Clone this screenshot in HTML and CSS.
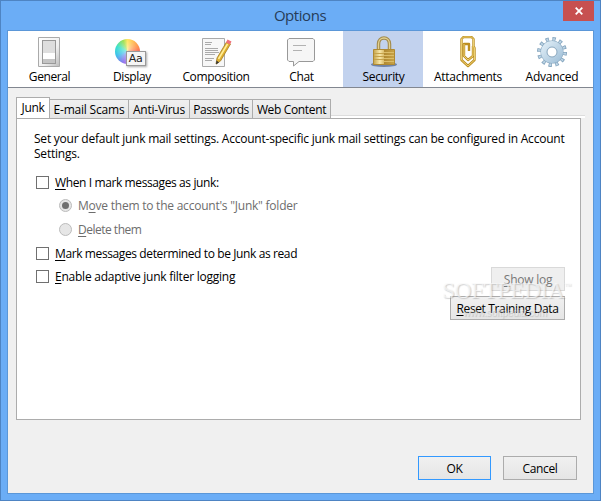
FILE: index.html
```html
<!DOCTYPE html>
<html lang="en">
<head>
<meta charset="utf-8">
<title>Options</title>
<link rel="stylesheet" href="styles.css">
</head>
<body>
<div class="window">
  <header class="titlebar"><h1>Options</h1>
    <button class="close" aria-label="Close"><svg width="8" height="8" viewBox="0 0 8 8"><path d="M.7.7l6.6 6.6M7.3.7L.7 7.3" stroke="#fff" stroke-width="1.8"/></svg></button>
  </header>
  <main class="client">
    <nav class="toolbar">
      <div class="tool t1"><svg width="32" height="32" viewBox="0 0 32 32"><defs><linearGradient id="sw" x2="1" y2="1"><stop stop-color="#fff"/><stop offset=".6" stop-color="#f0f0f0"/><stop offset="1" stop-color="#bbb"/></linearGradient></defs><path d="M5.500 1.500h21v29h-21z" fill="url(#sw)" stroke="#aaa"/><path d="M9 4h14v24H9z" fill="#999"/><path d="M10 5h12v12H10z" fill="#dedede"/><path d="M10 17h12v6H10z" fill="#fff"/><path d="M10 23h12v4H10z" fill="#c4c4c4"/></svg><span>General</span></div>
      <div class="tool t2"><div class="colorball"><i></i><b>Aa</b></div><span>Display</span></div>
      <div class="tool t3"><svg width="32" height="32" viewBox="0 0 32 32"><path d="M2.500 2.500h22v28h-22z" fill="#f7f7f7" stroke="#aaa"/><path d="M5 6.500h7M5 8.500h6M5 12.500h13M5 14.500h13M5 16.500h14M5 18.500h10M5 22.500h9M5 24.500h7" stroke="#aaa"/><path d="M16 28l1-6L26.500 6l4 2-10 17z" fill="#e0b030" stroke="#a37d26" stroke-width=".8"/><path d="M18.500 23L27.500 8" stroke="#fff09b" stroke-width="1.500"/><path d="M26 6.500l1.500-3 4 2-1.500 3z" fill="#f0707a"/><path d="M16 28.500l.5-4 2.500 2z" fill="#333"/></svg><span>Composition</span></div>
      <div class="tool t4"><svg width="32" height="32" viewBox="0 0 32 32"><path d="M4 2.500h24l1.500 1.500v20L28 25.500H14L8.500 30v-4.500H4L2.500 24V4z" fill="#f6f6f6" stroke="#999"/><path d="M8 9.500h13M8 14.500h9" stroke="#b2b2b2"/></svg><span>Chat</span></div>
      <div class="tool t5 selected"><svg width="32" height="32" viewBox="0 0 32 32"><defs><linearGradient id="lk"><stop stop-color="#c4a34a"/><stop offset=".3" stop-color="#f8e7a8"/><stop offset=".48" stop-color="#ddc071"/><stop offset=".52" stop-color="#b18a33"/><stop offset="1" stop-color="#c9a448"/></linearGradient></defs><ellipse cx="16" cy="28.500" rx="13" ry="2.500" fill="#7083a6"/><path d="M10.500 15V8c0-8 11-8 11 0v7" fill="none" stroke="#a28b4d" stroke-width="3.500"/><path d="M10.500 15V8c0-8 11-8 11 0v7" fill="none" stroke="#e2d190" stroke-width="1.300"/><path d="M5.500 13.500h21v15h-21z" fill="url(#lk)" stroke="#af8a34"/><path d="M6 17.500h10M6 20.500h10M6 23.500h10" stroke="#c5a24b"/><path d="M16 16.500h10M16 19.500h10M16 22.500h10M16 25.500h10" stroke="#dbbd6a"/></svg><span>Security</span></div>
      <div class="tool t6"><svg width="32" height="32" viewBox="0 0 32 32"><g fill="none" stroke-linejoin="round"><path d="M21 10v10l-5 4-4-4V8h5v7M9.500 24V3l2-2h8l2 2v7l1 2v12l-6.500 6z" stroke="#bd8f22" stroke-width="2.400"/><path d="M21 10v10l-5 4-4-4V8M9.500 24V3l2-2h8l2 2v7l1 2v12l-6.500 6z" stroke="#f0d77c" stroke-width=".9"/></g></svg><span>Attachments</span></div>
      <div class="tool t7"><svg width="32" height="32" viewBox="0 0 32 32"><defs><linearGradient id="gear" x2="1" y2="1"><stop stop-color="#dcebf5"/><stop offset="1" stop-color="#a5c3da"/></linearGradient></defs><circle cx="16" cy="16" r="12.800" fill="none" stroke="#86a6bf" stroke-width="4.400" stroke-dasharray="3.300 3.402"/><circle cx="16" cy="16" r="12.600" fill="none" stroke="#bdd4e5" stroke-width="3" stroke-dasharray="1.700 4.897" stroke-dashoffset="-.8"/><circle cx="16" cy="16" r="8" fill="none" stroke="#86a6bf" stroke-width="7"/><circle cx="16" cy="16" r="8" fill="none" stroke="url(#gear)" stroke-width="6"/><circle cx="16" cy="16" r="5" fill="#fff" stroke="#8ba9c0"/></svg><span>Advanced</span></div>
    </nav>
    <div class="tabs"><div class="tab active a1"><span>Junk</span></div><div class="tab a2"><span>E-mail Scams</span></div><div class="tab a3"><span>Anti-Virus</span></div><div class="tab a4"><span>Passwords</span></div><div class="tab a5"><span>Web Content</span></div></div>
    <section class="panel">
      <p class="intro"><span>Set your default junk mail settings. Account-specific junk mail settings can be configured in Account</span><br>Settings.</p>
      <label class="row r1"><i class="check"></i><span><u>W</u>hen I mark messages as junk:</span></label>
      <label class="row sub r2"><i class="radio on"></i><span>M<u>o</u>ve them to the account's "Junk" folder</span></label>
      <label class="row sub r3"><i class="radio"></i><span><u>D</u>elete them</span></label>
      <label class="row r4"><i class="check"></i><span><u>M</u>ark messages determined to be Junk as read</span></label>
      <label class="row r5"><i class="check"></i><span><u>E</u>nable adaptive junk filter logging</span></label>
      <div class="actions"><button class="log" disabled><span><u>S</u>how log</span></button><button class="reset"><span><u>R</u>eset Training Data</span></button><div class="watermark"><div>SOFTPEDIA<sup>™</sup></div><small>www.softpedia.com</small></div></div>
    </section>
    <footer><button class="ok">OK</button><button class="cancel">Cancel</button></footer>
  </main>
</div>
</body>
</html>
```
FILE: styles.css
```css
* { box-sizing: border-box; }
body { margin: 0; font: 12px/15px "Open Sans", sans-serif; color: #000; letter-spacing: -.35px; overflow: hidden; }
i { font-style: normal; }
u { text-underline-offset: 2px; text-decoration-thickness: 1px; }
button { font: inherit; letter-spacing: inherit; padding: 0; border: 1px solid #acacac; background: linear-gradient(#f0f0f0, #e5e5e5); color: #000; }
.window { width: 601px; height: 501px; border: 1px solid #4e84c3; background: #6badf6; padding: 0 6px 6px; }
.titlebar { height: 29px; position: relative; }
h1 { font-size: 15px; font-weight: 400; line-height: 29px; margin: 0; padding-right: 1px; text-align: center; color: #263c58; letter-spacing: -.45px; }
.close { position: absolute; right: 0; top: 0; width: 31px; height: 20px; border: 0; background: #c75050; display: grid; place-items: center; }
.client { height: 464px; border: 1px solid #5b97d8; background: #f0f0f0; }
.toolbar { height: 57px; display: flex; background: #fff; border-bottom: 1px solid #828790; }
.tool { display: flex; flex-direction: column; align-items: center; padding-top: 5px; line-height: 16px; }
.tool > svg, .colorball { flex: none; margin-bottom: 1px; }
.tool > span { white-space: nowrap; }
.t1 { width: 82px; padding-right: 1px; } .t2 { width: 83px; } .t3 { width: 86px; } .t4 { width: 84px; } .t5 { width: 80px; padding-left: 1px; } .t6 { width: 88px; padding-left: 2px; letter-spacing: -.27px; } .t7 { width: 80px; padding-left: 2px; letter-spacing: -.25px; }
.t1 span { padding-left: 2px; letter-spacing: -.4px; } .t4 span { padding-left: 1px; } .t2 span { padding-left: 1px; }
.selected { background: #c2d2ee; }
.colorball { width: 32px; height: 32px; position: relative; }
.colorball i { position: absolute; left: -1px; top: 3px; width: 25px; height: 25px; border-radius: 50%; background: radial-gradient(#fff8, transparent 70%), conic-gradient(#ffe45a, #ff8547 20%, #f2505c 28%, #e15edb 42%, #8778ef 57%, #35bfea 70%, #34e1ca 82%, #9ddf4f 94%, #ffe45a); }
.colorball b { position: absolute; left: 10px; top: 15px; width: 20px; height: 15px; border: 1px solid #999; background: #f5f5f5; box-shadow: 1px 1px 2px #aaa; font: 11px/13px "DejaVu Sans", sans-serif; text-align: center; color: #222; }
.tabs { height: 30px; display: flex; align-items: flex-end; padding: 0 8px; }
.tabs::after { content: ""; flex: 1; height: 2px; border-top: 1px solid #ddd; background: #fff; }
.tab { height: 19px; border: 1px solid #acacac; border-bottom: 0; background: linear-gradient(#f0f0f0, #e5e5e5); display: grid; place-items: center; white-space: nowrap; line-height: 15px; }
.tab.active { height: 21px; background: #fff; }
.tab.active span { position: relative; top: -1px; }
.a1 { width: 34px; } .a2 { width: 79px; border-left: 0; letter-spacing: -.2px; } .a3 { width: 61px; border-left: 0; letter-spacing: -.23px; } .a4 { width: 63px; letter-spacing: -.48px; border-left: 0; } .a5 { width: 78px; border-left: 0; }
.panel { margin: 0 12px 0 8px; height: 302px; background: #fff; border: 1px solid #acacac; padding: 12px 15px 0 17px; }
.intro { margin: 0 0 14px; white-space: nowrap; letter-spacing: -.22px; }
.row { display: flex; align-items: center; height: 15px; }
.row span { white-space: nowrap; }
.check { width: 13px; height: 13px; border: 1px solid #707070; margin: 0 6px 0 2px; }
.sub { margin: 8px 0 0 25px; color: #6d6d6d; }
.radio { width: 13px; height: 13px; border: 1px solid #bcbcbc; background: #e6e6e6; border-radius: 50%; margin-right: 6px; display: grid; place-items: center; }
.radio.on::after { content: ""; width: 7px; height: 7px; background: #707070; border-radius: 50%; }
.r1 { letter-spacing: -.39px; }
.r2 { letter-spacing: -.23px; }
.r3 { margin-top: 9px; letter-spacing: -.5px; }
.r4 { margin-top: 9px; letter-spacing: -.39px; }
.r5 { margin-top: 8px; letter-spacing: -.24px; }
.actions { margin-top: -17px; display: flex; flex-direction: column; align-items: flex-end; gap: 5px; position: relative; }
.log { width: 74px; height: 24px; color: #777; border-color: #d9d9d9; background: #efefef; letter-spacing: -.25px; }
.reset { width: 115px; height: 24px; letter-spacing: -.36px; }
.watermark { position: absolute; left: 408px; top: 11px; font: 23.5px/24px "Liberation Serif", serif; letter-spacing: -.5px; color: #fafafaaa; text-shadow: 1px 1px 1px #8886; white-space: nowrap; pointer-events: none; }
.watermark sup { font-size: 7px; line-height: 1; vertical-align: 10px; }
.watermark small { display: block; font: 10px/10px "Liberation Sans", sans-serif; margin: 6px 0 0 21px; letter-spacing: -.15px; color: #fafafa66; }
footer { display: flex; justify-content: flex-end; padding: 36px 16px 0 0; gap: 12px; }
footer button { height: 24px; width: 74px; }
footer .ok { width: 73px; border-color: #3399ff; }
```
